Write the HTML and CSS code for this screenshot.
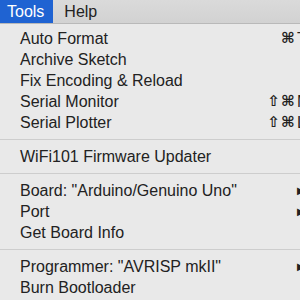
FILE: index.html
```html
<!DOCTYPE html>
<html lang="en">
<head>
    <meta charset="UTF-8">
    <title>Tools menu</title>
    <link rel="stylesheet" href="styles.css">
</head>
<body>
    <div class="menubar">
        <span class="bar-item active">Tools</span>
        <span class="bar-item help">Help</span>
    </div>

    <div class="menu">
        <div class="item"><span>Auto Format</span><span class="mods">⌘</span><span class="key">T</span></div>
        <div class="item"><span>Archive Sketch</span></div>
        <div class="item"><span>Fix Encoding &amp; Reload</span></div>
        <div class="item"><span>Serial Monitor</span><span class="mods">⇧⌘</span><span class="key">M</span></div>
        <div class="item"><span>Serial Plotter</span><span class="mods">⇧⌘</span><span class="key">L</span></div>

        <div class="sep"></div>

        <div class="item"><span>WiFi101 Firmware Updater</span></div>

        <div class="sep"></div>

        <div class="item"><span>Board: "Arduino/Genuino Uno"</span><span class="mods"></span><span class="key arrow">▶</span></div>
        <div class="item"><span>Port</span><span class="mods"></span><span class="key arrow">▶</span></div>
        <div class="item"><span>Get Board Info</span></div>

        <div class="sep"></div>

        <div class="item"><span>Programmer: "AVRISP mkII"</span><span class="mods"></span><span class="key arrow">▶</span></div>
        <div class="item"><span>Burn Bootloader</span></div>
    </div>
</body>
</html>
```

FILE: styles.css
```css
* {
    margin: 0;
    padding: 0;
    box-sizing: border-box;
}

body {
    width: 300px;
    height: 300px;
    overflow: hidden;
    background: #e9e9e9;
    font-family: "Liberation Sans", Arial, sans-serif;
    font-size: 16px;
    color: #222;
}

/* top menu bar */
.menubar {
    display: flex;
    height: 24px;
    background: linear-gradient(#dadada, #d2d2d2);
    border-bottom: 1px solid #b9b9b9;
}

.bar-item {
    height: 23px;
    line-height: 23px;
    padding: 0 9px 0 7px;
}

.bar-item.active {
    background: #1f63d2;
    color: #fff;
}

.bar-item.help {
    padding-left: 11px;
}

/* dropdown */
.menu {
    width: 330px;
    padding-top: 4px;
    background: #e9e9e9;
}

.item {
    display: grid;
    grid-template-columns: 1fr auto 34px;
    height: 21px;
    line-height: 21px;
    padding-left: 20px;
}

.mods {
    text-align: right;
    font-family: "DejaVu Sans", sans-serif;
    font-size: 15px;
    font-weight: bold;
    letter-spacing: 1px;
}

.key {
    padding-left: 1px;
}

.arrow {
    font-family: "DejaVu Sans", sans-serif;
    font-size: 10px;
    padding-left: 1px;
}

.sep {
    height: 1px;
    margin: 6px 0;
    background: #cdcdcd;
}
```
